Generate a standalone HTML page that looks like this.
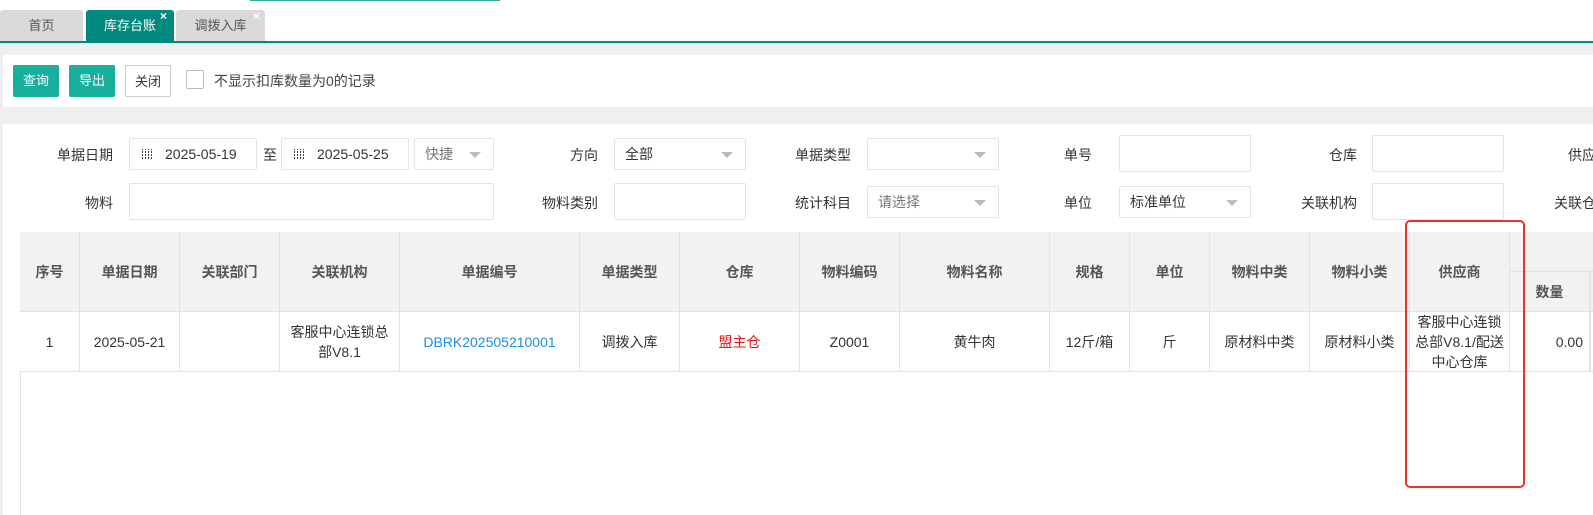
<!DOCTYPE html>
<html><head><meta charset="utf-8"><style>
*{box-sizing:border-box;margin:0;padding:0}
body{width:1593px;height:515px;overflow:hidden;background:#efefef;font-family:"Liberation Sans","Noto Sans CJK SC",sans-serif;font-size:14px;color:#333;position:relative}
.a{position:absolute;white-space:nowrap}
.tab{position:absolute;top:10px;height:31px;line-height:31px;text-align:center;background:#d9d9d9;color:#555;border-radius:3px 3px 0 0;font-size:13px}
.x{position:absolute;top:-9px;font-size:12px;font-weight:bold}
.btn{position:absolute;top:65px;height:32px;width:46px;line-height:32px;text-align:center;color:#fff;background:#17b09d;border-radius:2px;font-size:13px}
.lbl{position:absolute;text-align:right;width:100px;color:#333;font-size:14px;white-space:nowrap}
.inp{position:absolute;border:1px solid #e3e3e3;background:#fff;border-radius:2px;line-height:30px;padding-left:10px;color:#333}
.arr{position:absolute;right:12px;top:50%;margin-top:-2px;border-left:6px solid transparent;border-right:6px solid transparent;border-top:6px solid #bbb}
.cal{position:absolute;left:12px;top:10px;width:11px;height:11px;background:repeating-linear-gradient(90deg,#444 0 1px,transparent 1px 3px)}
.cal:after{content:"";position:absolute;inset:0;background:repeating-linear-gradient(0deg,#fff 0 1px,transparent 1px 3px)}
.c{position:absolute;border-right:1px solid #e2e2e2;text-align:center;display:flex;align-items:center;justify-content:center;line-height:20px}
.h{background:#f2f2f2;color:#555;font-weight:bold;top:232px;height:80px;border-bottom:1px solid #e2e2e2}
.r{top:312px;height:60px;border-bottom:1px solid #e2e2e2;background:#fff}
</style></head><body>
<div class="a" style="left:0;top:0;width:1593px;height:41px;background:#fff"></div>
<div class="a" style="left:250px;top:0;width:250px;height:1px;background:#2aa99d"></div>
<div class="tab" style="left:0;width:83px">首页</div>
<div class="tab" style="left:86px;width:88px;background:#008a80;color:#fff">库存台账<span class="x" style="left:74px;color:#fff">×</span></div>
<div class="tab" style="left:176px;width:89px">调拨入库<span class="x" style="left:77px;color:#fff">×</span></div>
<div class="a" style="left:0;top:41px;width:1593px;height:2px;background:#008a80"></div>

<div class="a" style="left:3px;top:55px;width:1590px;height:52px;background:#fff"></div>
<div class="btn" style="left:13px">查询</div>
<div class="btn" style="left:69px">导出</div>
<div class="btn" style="left:125px;background:#fff;color:#333;border:1px solid #ccc">关闭</div>
<div class="a" style="left:186px;top:70px;width:18px;height:19px;border:1px solid #bbb;border-radius:2px;background:#fff"></div>
<div class="a" style="left:214px;top:71px;font-size:14px;color:#444">不显示扣库数量为0的记录</div>

<div class="a" style="left:3px;top:124px;width:1590px;height:391px;background:#fff"></div>

<div class="lbl" style="left:13px;top:145px">单据日期</div>
<div class="inp" style="left:129px;top:138px;width:128px;height:32px;padding-left:35px;font-size:14px"><span class="cal"></span>2025-05-19</div>
<div class="a" style="left:263px;top:145px;font-size:14px">至</div>
<div class="inp" style="left:281px;top:138px;width:128px;height:32px;padding-left:35px;font-size:14px"><span class="cal"></span>2025-05-25</div>
<div class="inp" style="left:414px;top:138px;width:80px;height:32px;color:#777">快捷<span class="arr"></span></div>
<div class="lbl" style="left:498px;top:145px">方向</div>
<div class="inp" style="left:614px;top:138px;width:132px;height:32px">全部<span class="arr"></span></div>
<div class="lbl" style="left:751px;top:145px">单据类型</div>
<div class="inp" style="left:867px;top:138px;width:132px;height:32px"><span class="arr"></span></div>
<div class="lbl" style="left:992px;top:145px">单号</div>
<div class="inp" style="left:1119px;top:135px;width:132px;height:37px"></div>
<div class="lbl" style="left:1257px;top:145px">仓库</div>
<div class="inp" style="left:1372px;top:135px;width:132px;height:37px"></div>
<div class="a" style="left:1568px;top:145px">供应商</div>

<div class="lbl" style="left:13px;top:193px">物料</div>
<div class="inp" style="left:129px;top:183px;width:365px;height:37px"></div>
<div class="lbl" style="left:498px;top:193px">物料类别</div>
<div class="inp" style="left:614px;top:183px;width:132px;height:37px"></div>
<div class="lbl" style="left:751px;top:193px">统计科目</div>
<div class="inp" style="left:867px;top:186px;width:132px;height:32px;color:#777">请选择<span class="arr"></span></div>
<div class="lbl" style="left:992px;top:193px">单位</div>
<div class="inp" style="left:1119px;top:186px;width:132px;height:32px">标准单位<span class="arr"></span></div>
<div class="lbl" style="left:1257px;top:193px">关联机构</div>
<div class="inp" style="left:1372px;top:183px;width:132px;height:37px"></div>
<div class="a" style="left:1554px;top:193px">关联仓库</div>

<div class="a" style="left:20px;top:232px;width:1573px;height:283px;border-left:1px solid #e2e2e2;border-top:1px solid #e2e2e2"></div>
<div class="c h" style="left:20px;width:60px">序号</div>
<div class="c h" style="left:80px;width:100px">单据日期</div>
<div class="c h" style="left:180px;width:100px">关联部门</div>
<div class="c h" style="left:280px;width:120px">关联机构</div>
<div class="c h" style="left:400px;width:180px">单据编号</div>
<div class="c h" style="left:580px;width:100px">单据类型</div>
<div class="c h" style="left:680px;width:120px">仓库</div>
<div class="c h" style="left:800px;width:100px">物料编码</div>
<div class="c h" style="left:900px;width:150px">物料名称</div>
<div class="c h" style="left:1050px;width:80px">规格</div>
<div class="c h" style="left:1130px;width:80px">单位</div>
<div class="c h" style="left:1210px;width:100px">物料中类</div>
<div class="c h" style="left:1310px;width:100px">物料小类</div>
<div class="c h" style="left:1410px;width:100px">供应商</div>
<div class="c h" style="left:1510px;width:83px;border-right:none"></div>
<div class="a" style="left:1510px;top:271px;width:83px;height:1px;background:#e2e2e2"></div>
<div class="c" style="left:1510px;top:272px;width:80px;height:40px;color:#555;font-weight:bold">数量</div>
<div class="a" style="left:1590px;top:272px;width:1px;height:100px;background:#e2e2e2"></div>

<div class="c r" style="left:20px;width:60px">1</div>
<div class="c r" style="left:80px;width:100px">2025-05-21</div>
<div class="c r" style="left:180px;width:100px"></div>
<div class="c r" style="left:280px;width:120px;padding:0 8px">客服中心连锁总部V8.1</div>
<div class="c r" style="left:400px;width:180px;color:#1a8fe0">DBRK202505210001</div>
<div class="c r" style="left:580px;width:100px">调拨入库</div>
<div class="c r" style="left:680px;width:120px;color:#e8141e">盟主仓</div>
<div class="c r" style="left:800px;width:100px">Z0001</div>
<div class="c r" style="left:900px;width:150px">黄牛肉</div>
<div class="c r" style="left:1050px;width:80px">12斤/箱</div>
<div class="c r" style="left:1130px;width:80px">斤</div>
<div class="c r" style="left:1210px;width:100px">原材料中类</div>
<div class="c r" style="left:1310px;width:100px">原材料小类</div>
<div class="c r" style="left:1410px;width:100px;white-space:nowrap">客服中心连锁<br>总部V8.1/配送<br>中心仓库</div>
<div class="c r" style="left:1510px;width:80px;justify-content:flex-end;padding-right:6px">0.00</div>
<div class="a" style="left:1590px;top:312px;width:3px;height:60px;border-bottom:1px solid #e2e2e2"></div>

<div class="a" style="left:1405px;top:220px;width:120px;height:268px;border:2px solid #f0302a;border-radius:5px"></div>
</body></html>
